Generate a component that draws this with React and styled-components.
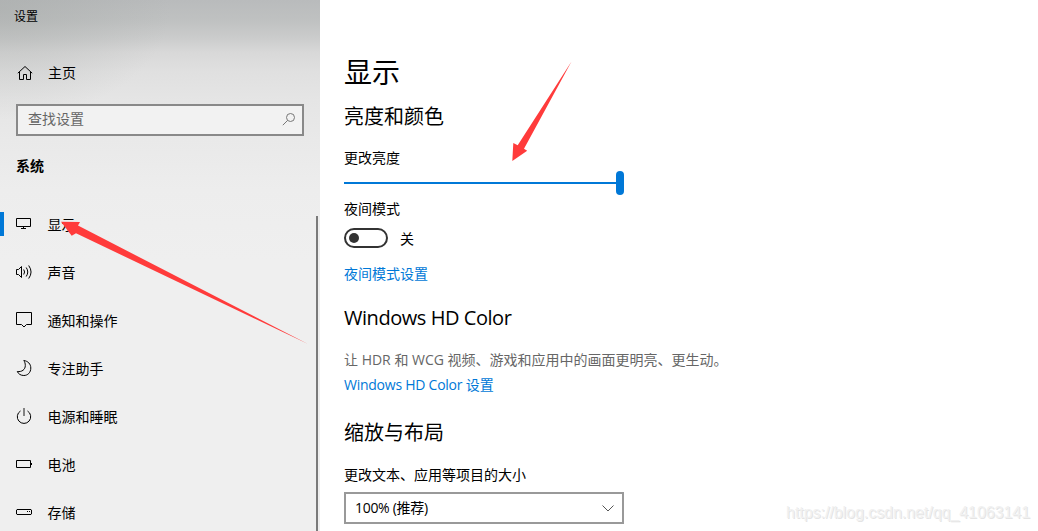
import React from "react";
import styled, { createGlobalStyle } from "styled-components";

const GlobalStyle = createGlobalStyle`
  * { box-sizing: border-box; }
  body {
    margin: 0;
    overflow: hidden;
    background: #fff;
    color: #000;
    font: 14px/20px "Open Sans", "Noto Sans CJK SC", sans-serif;
  }
`;

const Window = styled.div`
  position: relative;
  display: flex;
  width: 1038px;
  height: 531px;
  overflow: hidden;
`;

const Sidebar = styled.aside`
  display: flex;
  flex-direction: column;
  flex: none;
  width: 320px;
  height: 531px;
  background:
    radial-gradient(ellipse 170px 110px at 0 10px, rgba(160, 164, 162, 0.4), rgba(185, 188, 186, 0) 100%),
    linear-gradient(180deg, #b9bbbc 0, #bfc1c1 20px, #cbcccc 38px, #d8d8d8 52px, #e0e0e0 72px, #e5e5e5 100px, #e9e9e9 140px, #ededed 190px, #efefef 260px);
`;

const TitleBar = styled.header`
  height: 32px;
  padding-left: 14px;
  font-size: 12px;
  line-height: 34px;
`;

const HomeLink = styled.a`
  display: flex;
  align-items: center;
  gap: 15px;
  height: 48px;
  margin: 17px 0 7px;
  padding-left: 17px;
`;

const SearchBox = styled.div`
  display: flex;
  align-items: center;
  justify-content: space-between;
  flex: none;
  width: 288px;
  height: 32px;
  margin-left: 16px;
  padding: 0 6px 2px 10px;
  border: 2px solid #898989;
  background: #f2f2f2;
  color: #666;
`;

const GroupTitle = styled.h2`
  margin: 20px 0 24px;
  padding-left: 16px;
  font-size: 14px;
  font-weight: 700;
  line-height: 20px;
`;

const NavArea = styled.div`
  display: flex;
  flex: 1;
  min-height: 0;
  overflow: hidden;
`;

const NavList = styled.nav`
  width: 316px;
`;

const NavItem = styled.a`
  display: flex;
  align-items: center;
  height: 48px;
`;

const Marker = styled.span`
  width: 4px;
  height: 24px;
  margin-right: 11px;
  background: ${(p) => (p.$active ? "#0078d7" : "transparent")};
`;

const NavIcon = styled.span`
  display: flex;
  width: 18px;
  margin-right: 14.5px;
`;

const NavLabel = styled.span`
  padding-top: 2px;
`;

const Scrollbar = styled.div`
  width: 2px;
  margin-top: 16px;
  background: #7a7a7a;
`;

const Content = styled.main`
  display: flex;
  flex-direction: column;
  align-items: flex-start;
  padding: 52px 0 0 24px;
`;

const PageTitle = styled.h1`
  margin: 0;
  font-size: 28px;
  font-weight: 400;
  line-height: 40px;
`;

const SectionTitle = styled.h2`
  margin: ${(p) => p.$top}px 0 0;
  font-size: 20px;
  font-weight: 400;
  line-height: 28px;
  letter-spacing: ${(p) => p.$spacing || 0}px;
`;

const Label = styled.div`
  margin-top: ${(p) => p.$top}px;
`;

const Description = styled.p`
  margin: 18px 0 0;
  color: #666;
  white-space: nowrap;
`;

const Latin = styled.span`
  letter-spacing: ${(p) => p.$spacing}px;
`;

const Link = styled.a`
  margin-top: ${(p) => p.$top}px;
  color: #0078d7;
`;

const Slider = styled.div`
  display: flex;
  align-items: center;
  width: 280px;
  height: 24px;
  margin-top: 3px;
`;

const SliderTrack = styled.div`
  flex: 1;
  height: 2px;
  background: #0078d7;
`;

const SliderThumb = styled.div`
  width: 8px;
  height: 24px;
  border-radius: 4px;
  background: #0078d7;
`;

const ToggleRow = styled.div`
  display: flex;
  align-items: center;
  gap: 12px;
  height: 20px;
  margin-top: 9px;
`;

const ToggleState = styled.span`
  padding-top: 2px;
`;

const Toggle = styled.div`
  display: flex;
  align-items: center;
  width: 44px;
  height: 20px;
  padding-left: 3px;
  border: 2px solid #333;
  border-radius: 10px;
`;

const ToggleKnob = styled.div`
  width: 10px;
  height: 10px;
  border-radius: 50%;
  background: #333;
`;

const Select = styled.div`
  display: flex;
  align-items: center;
  justify-content: space-between;
  width: 280px;
  height: 32px;
  margin-top: 7px;
  padding: 0 8px 0 9px;
  border: 2px solid #999;
`;

const Arrows = styled.svg`
  position: absolute;
  inset: 0;
  pointer-events: none;
`;

const Watermark = styled.div`
  position: absolute;
  right: 8px;
  bottom: 7px;
  color: #f1f1f1;
  font: 16px/22px "Liberation Sans", sans-serif;
  letter-spacing: -0.05px;
  text-shadow: 1px 1px 0 #e4e4e4;
`;

const Icon = ({ children, size = 18, color = "#000" }) => (
  <svg width={size} height={size} viewBox={`0 0 ${size} ${size}`} fill="none" stroke={color} strokeWidth="1">
    {children}
  </svg>
);

const items = [
  {
    label: "显示",
    active: true,
    icon: <path d="M1.5 3.5h14v8h-14zM8.5 11.5v2M6 13.5h5" />,
  },
  {
    label: "声音",
    icon: (
      <path d="M1.5 6.5h2L6.5 3.5v11L3.5 11.5h-2zM8.7 6.5Q10.5 9 8.7 11.5M11.2 4.5Q14.3 9 11.2 13.5M13.7 2.500Q18.400 9 13.700 15.500" />
    ),
  },
  {
    label: "通知和操作",
    icon: <path d="M1.5 1.5h15v12h-5L9 16 6.5 13.5h-5z" />,
  },
  {
    label: "专注助手",
    icon: <path d="M8.8 1.5c4.2.6 7 3.5 7 7.5 0 4.500-3 7.500-7 7.500-3 0-5.400-1.500-6.500-4 4.500.6 8-1.800 8-6 0-2-.5-3.500-1.500-5z" />,
  },
  {
    label: "电源和睡眠",
    icon: (
      <>
        <path d="M5.5 4a6.700 6.700 0 1 0 7 0" />
        <path d="M9 1v8" stroke="#777" strokeWidth="1.8" />
      </>
    ),
  },
  {
    label: "电池",
    icon: <path d="M1.5 5.5h14v7h-14zM16.5 8v2" />,
  },
  {
    label: "存储",
    icon: <path d="M2 6.5h14l.5.5v4l-.5.5H2l-.5-.5V7zM12 8.5h1M14 8.5h1" />,
  },
];

export default function App() {
  return (
    <>
      <GlobalStyle />
      <Window>
        <Sidebar>
          <TitleBar>设置</TitleBar>
          <HomeLink>
            <Icon size={16}>
              <path d="M.8 8.200 8 1.500l7.200 6.700M2.500 7v7.500h4v-5h3v5h4V7" />
            </Icon>
            主页
          </HomeLink>
          <SearchBox>
            查找设置
            <Icon size={14} color="#777">
              <circle cx="8.5" cy="5.5" r="4" />
              <path d="M5.600 8.400.8 13.200" />
            </Icon>
          </SearchBox>
          <GroupTitle>系统</GroupTitle>
          <NavArea>
            <NavList>
              {items.map((item) => (
                <NavItem key={item.label}>
                  <Marker $active={item.active} />
                  <NavIcon>
                    <Icon>{item.icon}</Icon>
                  </NavIcon>
                  <NavLabel>{item.label}</NavLabel>
                </NavItem>
              ))}
            </NavList>
            <Scrollbar />
          </NavArea>
        </Sidebar>
        <Content>
          <PageTitle>显示</PageTitle>
          <SectionTitle $top={11}>亮度和颜色</SectionTitle>
          <Label $top={17}>更改亮度</Label>
          <Slider>
            <SliderTrack />
            <SliderThumb />
          </Slider>
          <Label $top={4}>夜间模式</Label>
          <ToggleRow>
            <Toggle>
              <ToggleKnob />
            </Toggle>
            <ToggleState>关</ToggleState>
          </ToggleRow>
          <Link $top={16}>夜间模式设置</Link>
          <SectionTitle $top={20} $spacing={-0.45}>Windows HD Color</SectionTitle>
          <Description>
            让 HDR 和 WCG 视频、游戏和应用中的画面更明亮、更生动。
          </Description>
          <Link $top={5}>
            <Latin $spacing={-0.25}>Windows HD Color</Latin> 设置
          </Link>
          <SectionTitle $top={24}>缩放与布局</SectionTitle>
          <Label $top={18}>更改文本、应用等项目的大小</Label>
          <Select>
            <Latin $spacing={-0.3}>100% (推荐)</Latin>
            <Icon size={12} color="#555">
              <path d="M.5 3.5 6 9l5.500-5.500" />
            </Icon>
          </Select>
        </Content>
        <Arrows width="1038" height="531" fill="#ff3b3b">
          <path d="M61 221.700 80 222 78 225.600 308 344 76 233.300 71.700 235.700z" />
          <path d="M512.300 161 513.300 143 517.700 145.200 571.500 61.500 524 148.800 527.200 150.700z" />
        </Arrows>
        <Watermark>https://blog.csdn.net/qq_41063141</Watermark>
      </Window>
    </>
  );
}
